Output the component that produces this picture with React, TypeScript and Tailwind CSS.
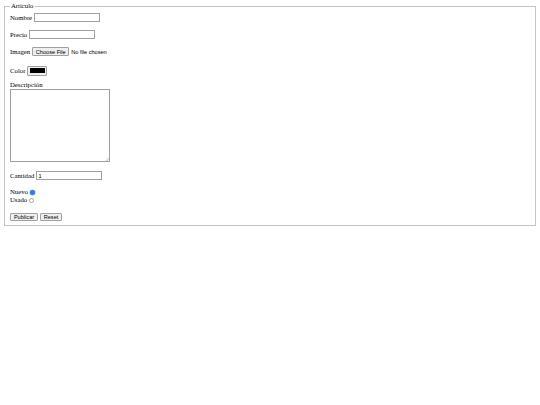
import { ReactNode } from 'react';

function Row({ label, children, className = '' }: { label: string; children: ReactNode; className?: string }) {
  return (
    <div className={`flex h-[9px] items-center gap-[2px] ${className}`}>
      <span>{label}</span>
      {children}
    </div>
  );
}

function TextField({ width, value }: { width: string; value?: string }) {
  return (
    <input
      type="text"
      defaultValue={value}
      className={`h-[9px] ${width} border border-[#a0a0a0] bg-white px-[1px] font-['Liberation_Sans',Arial,sans-serif] text-[5.6px] leading-none outline-none`}
    />
  );
}

function Radio({ checked }: { checked?: boolean }) {
  return checked ? (
    <span className="ml-[2px] inline-block h-[5px] w-[5px] rounded-full bg-[#2f7cf6] shadow-[0_0_0_0.5px_#8fb8f8]" />
  ) : (
    <span className="ml-[2px] inline-block h-[5px] w-[5px] rounded-full border border-[#a8a8a8] bg-white" />
  );
}

export default function App() {
  return (
    <div className="min-h-screen bg-white px-1 pt-[2px] font-['Liberation_Serif','Times_New_Roman',serif] text-[6.75px] leading-[8px] text-black">
      <fieldset className="border border-[#c4c4c4] px-[5px] pb-[4px]">
        <legend className="px-px">Artículo</legend>
        <div className="flex flex-col pt-[3px]">
          <Row label="Nombre">
            <TextField width="w-[66px]" />
          </Row>

          <Row label="Precio" className="mt-[8px]">
            <TextField width="w-[66px]" />
          </Row>

          <Row label="Imagen" className="mt-[8px]">
            <div className="flex items-center gap-[2px] font-['Liberation_Sans',Arial,sans-serif] text-[5.6px]">
              <span className="flex h-[9px] w-[37px] items-center justify-center rounded-[1px] border border-[#a0a0a0] bg-[#efefef]">
                Choose File
              </span>
              <span>No file chosen</span>
            </div>
          </Row>

          <Row label="Color" className="mt-[10px]">
            <span className="flex h-[10px] w-[20px] items-center justify-center rounded-[1px] border border-[#a0a0a0] bg-[#efefef] px-[1.5px] py-[1.5px]">
              <span className="h-full w-full bg-black" />
            </span>
          </Row>

          <div className="mt-[6px]">Descripción</div>
          <div className="relative h-[73px] w-[100px]">
            <textarea className="h-full w-full resize-none border border-[#a0a0a0] bg-white outline-none" />
            <svg className="absolute bottom-[1px] right-[1px] h-[4px] w-[4px]" viewBox="0 0 4 4">
              <path d="M4 0.5 L0.5 4 M4 2.2 L2.2 4" stroke="#9a9a9a" strokeWidth="0.5" />
            </svg>
          </div>

          <Row label="Cantidad" className="mt-[9px]">
            <TextField width="w-[66px]" value="1" />
          </Row>

          <div className="mt-[8px] flex items-center">
            <span>Nuevo</span>
            <Radio checked />
          </div>
          <div className="flex items-center">
            <span>Usado</span>
            <Radio />
          </div>

          <div className="mt-[9px] flex gap-[2px] font-['Liberation_Sans',Arial,sans-serif] text-[5.6px]">
            <button className="flex h-[8px] w-[28px] items-center justify-center rounded-[1px] border border-[#a0a0a0] bg-[#efefef]">
              Publicar
            </button>
            <button className="flex h-[8px] w-[22px] items-center justify-center rounded-[1px] border border-[#a0a0a0] bg-[#efefef]">
              Reset
            </button>
          </div>
        </div>
      </fieldset>
    </div>
  );
}
